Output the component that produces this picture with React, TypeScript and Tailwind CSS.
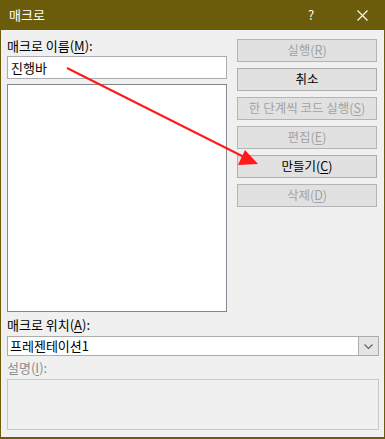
import React from "react";

// ─── Macro dialog ────────────────────────────────────────
// Windows-style "매크로" dialog with a red annotation arrow on top.

const font = { fontFamily: '"Noto Sans CJK KR", "Noto Sans", sans-serif' };

function Btn({ label, mn, rest, disabled }: { label: string; mn?: string; rest?: string; disabled?: boolean }) {
  return (
    <div
      className={
        "h-[23px] flex items-center justify-center border bg-[#e1e1e1] text-[12.5px] leading-none " +
        (disabled ? "border-[#b4b4b4] text-[#a3a3a3]" : "border-[#adadad] text-black")
      }
    >
      <span>
        {label}
        {mn && (
          <>
            (<u className="underline-offset-2">{mn}</u>){rest}
          </>
        )}
      </span>
    </div>
  );
}

export default function App() {
  return (
    <div className="relative w-[385px] h-[439px] flex flex-col bg-[#6b5c0b] select-none" style={font}>
      {/* title bar */}
      <div className="h-[30px] flex items-center text-white text-[13px]">
        <span className="pl-[9px] flex-1">매크로</span>
        <span className="w-[20px] text-[13px] mr-[36px] text-center">?</span>
        <svg width="11" height="11" viewBox="0 0 11 11" className="mr-[17px]">
          <path d="M0.5 0.5 L10.5 10.5 M10.5 0.5 L0.5 10.5" stroke="white" strokeWidth="1.1" />
        </svg>
      </div>

      {/* body */}
      <div className="flex-1 mx-px mb-[2px] bg-[#f0f0f0] flex flex-col px-[6px] text-[13px] leading-[16px] text-black">
        <div className="flex gap-[10px]">
          <div className="w-[220px] flex flex-col">
            <div className="mt-[8px] h-[16px]">
              매크로 이름(<u className="underline-offset-2">M</u>):
            </div>
            <div className="mt-[2px] h-[23px] bg-white border border-[#abadb3] flex items-center px-[3px] text-[13px]">
              진행바
            </div>
            <div className="mt-[5px] h-[228px] bg-white border border-[#828790]" />
          </div>
          <div className="w-[140px] mt-[9px] flex flex-col gap-[6px]">
            <Btn label="실행" mn="R" disabled />
            <Btn label="취소" />
            <Btn label="한 단계씩 코드 실행" mn="S" disabled />
            <Btn label="편집" mn="E" disabled />
            <Btn label="만들기" mn="C" />
            <Btn label="삭제" mn="D" disabled />
          </div>
        </div>

        <div className="mt-[5px] h-[16px]">
          매크로 위치(<u className="underline-offset-2">A</u>):
        </div>
        <div className="mt-[3px] w-[372px] h-[20px] bg-white border border-[#adadad] flex">
          <div className="flex-1 flex items-center px-[2px] text-[13px]">프레젠테이션1</div>
          <div className="w-[20px] bg-[#e5e5e5] border-l border-[#adadad] flex items-center justify-center">
            <svg width="9" height="5" viewBox="0 0 9 5">
              <path d="M0.5 0.5 L4.5 4.5 L8.5 0.5" stroke="#606060" fill="none" strokeWidth="1.1" />
            </svg>
          </div>
        </div>
        <div className="mt-[4px] h-[16px] text-[#8d8d8d]">
          설명(<u className="underline-offset-2">I</u>):
        </div>
        <div className="mt-[3px] w-[372px] h-[51px] bg-[#f0f0f0] border border-[#c8c8c8]" />
      </div>

      {/* annotation arrow */}
      <svg className="absolute left-0 top-0 pointer-events-none" width="385" height="439">
        <line x1="67" y1="68" x2="244" y2="157" stroke="#ff1a1a" strokeWidth="2" />
        <polygon points="258,164 238,165 245,150" fill="#ff1a1a" />
      </svg>
    </div>
  );
}
